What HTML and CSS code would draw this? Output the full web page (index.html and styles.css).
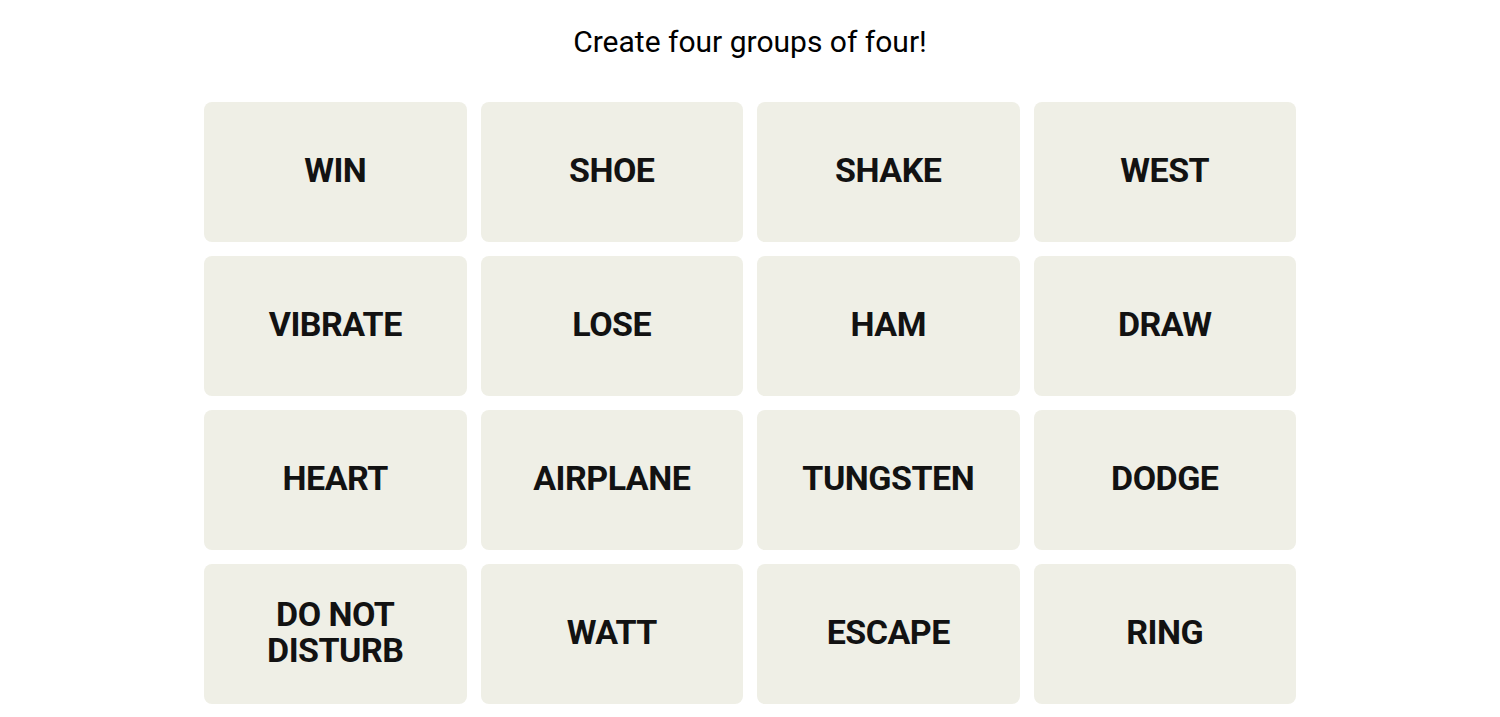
FILE: index.html
```html
<!DOCTYPE html>
<html lang="en">
<head>
<meta charset="utf-8">
<title>Connections</title>
<link rel="stylesheet" href="styles.css">
</head>
<body>
<main class="page">
  <h1 class="title">Create four groups of four!</h1>
  <section class="board">
    <div class="tile">WIN</div>
    <div class="tile">SHOE</div>
    <div class="tile">SHAKE</div>
    <div class="tile">WEST</div>
    <div class="tile">VIBRATE</div>
    <div class="tile">LOSE</div>
    <div class="tile">HAM</div>
    <div class="tile">DRAW</div>
    <div class="tile">HEART</div>
    <div class="tile">AIRPLANE</div>
    <div class="tile">TUNGSTEN</div>
    <div class="tile">DODGE</div>
    <div class="tile">DO NOT DISTURB</div>
    <div class="tile">WATT</div>
    <div class="tile">ESCAPE</div>
    <div class="tile">RING</div>
  </section>
</main>
</body>
</html>
```

FILE: styles.css
```css
html, body {
  margin: 0;
  padding: 0;
  background: #ffffff;
}

.page {
  display: flex;
  flex-direction: column;
  align-items: center;
  padding-top: 25px;
}

.title {
  margin: 0;
  font-family: Roboto, "Liberation Sans", sans-serif;
  font-weight: 400;
  font-size: 30px;
  line-height: 34px;
  color: #000000;
}

.board {
  margin-top: 43px;
  width: 1092px;
  display: grid;
  grid-template-columns: repeat(4, 1fr);
  grid-auto-rows: 140px;
  gap: 14px;
}

.tile {
  background: #efefe6;
  border-radius: 8px;
  display: flex;
  align-items: center;
  justify-content: center;
  text-align: center;
  font-family: Roboto, "Liberation Sans", sans-serif;
  font-weight: 700;
  font-size: 34px;
  letter-spacing: -0.5px;
  line-height: 36px;
  color: #121212;
  padding: 0 40px 5px;
}
```
